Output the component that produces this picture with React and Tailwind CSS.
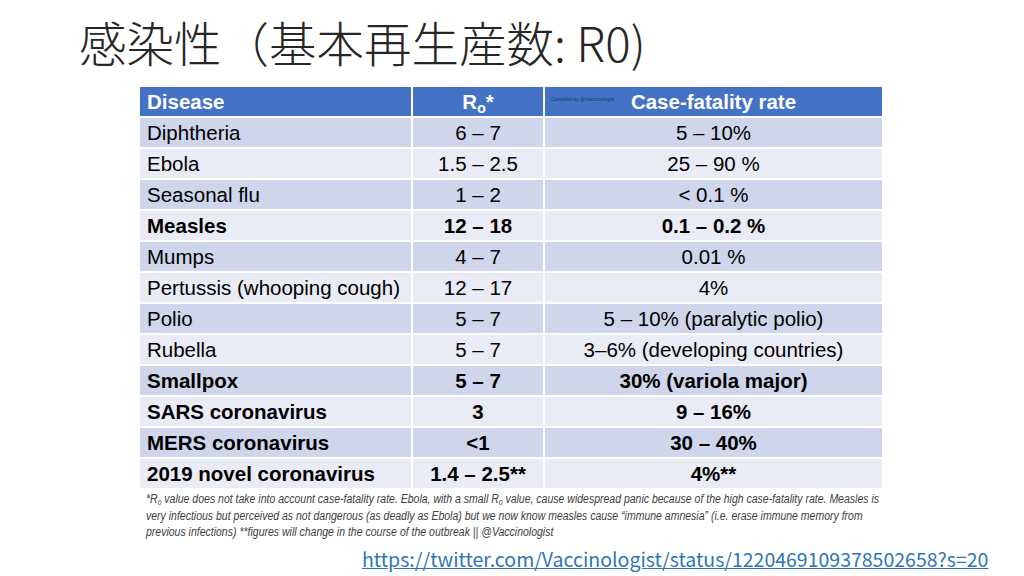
import React from "react";

const rows = [
	["Diphtheria", "6 – 7", "5 – 10%", false],
	["Ebola", "1.5 – 2.5", "25 – 90 %", false],
	["Seasonal flu", "1 – 2", "< 0.1 %", false],
	["Measles", "12 – 18", "0.1 – 0.2 %", true],
	["Mumps", "4 – 7", "0.01 %", false],
	["Pertussis (whooping cough)", "12 – 17", "4%", false],
	["Polio", "5 – 7", "5 – 10% (paralytic polio)", false],
	["Rubella", "5 – 7", "3–6% (developing countries)", false],
	["Smallpox", "5 – 7", "30% (variola major)", true],
	["SARS coronavirus", "3", "9 – 16%", true],
	["MERS coronavirus", "<1", "30 – 40%", true],
	["2019 novel coronavirus", "1.4 – 2.5**", "4%**", true],
];

const App = () => {
	return (
		<div className="w-[1024px] h-[576px] bg-white overflow-hidden flex flex-col">
			<h1 className="ml-[79px] mt-[9px] h-[65px] text-[47.5px] leading-[65px] font-light text-[#262626] font-['Noto_Sans_CJK_JP',sans-serif] whitespace-nowrap">
				感染性（基本再生産数: R0)
			</h1>

			<div className="ml-[140px] mt-[13px] w-[742px] grid grid-cols-[271px_130px_337px] gap-[2px] font-['Liberation_Sans',Arial,sans-serif] text-[20.5px] leading-[29px]">
				<div className="bg-[#4472C4] text-white font-bold pl-[7px] h-[29px]">Disease</div>
				<div className="bg-[#4472C4] text-white font-bold text-center h-[29px]">
					R<sub className="text-[14px] leading-none">o</sub>*
				</div>
				<div className="bg-[#4472C4] text-white font-bold text-center h-[29px] relative">
					<span className="absolute left-[6px] top-[10px] text-[5px] leading-none font-normal text-[#1f3a73] whitespace-nowrap">
						Compiled by @Vaccinologist
					</span>
					Case-fatality rate
				</div>
				{rows.map(([name, r0, cfr, bold], i) => {
					const bg = i % 2 === 0 ? "bg-[#CFD5EA]" : "bg-[#E9EBF5]";
					const weight = bold ? "font-bold" : "font-normal";
					return (
						<React.Fragment key={name}>
							<div className={`${bg} ${weight} text-black pl-[7px] h-[29px] whitespace-nowrap`}>{name}</div>
							<div className={`${bg} ${weight} text-black text-center h-[29px] whitespace-nowrap`}>{r0}</div>
							<div className={`${bg} ${weight} text-black text-center h-[29px] whitespace-nowrap`}>{cfr}</div>
						</React.Fragment>
					);
				})}
			</div>

			<p className="ml-[146px] mt-[3px] text-[12.5px] leading-[16.5px] italic text-[#404040] font-['Liberation_Sans',sans-serif] whitespace-nowrap origin-left scale-x-[0.84]">
				*R<sub className="text-[8px]">0</sub> value does not take into account case-fatality rate. Ebola, with a small R
				<sub className="text-[8px]">0</sub> value, cause widespread panic because of the high case-fatality rate. Measles is
				<br />
				very infectious but perceived as not dangerous (as deadly as Ebola) but we now know measles cause “immune amnesia” (i.e. erase immune memory from
				<br />
				previous infections) **figures will change in the course of the outbreak || @Vaccinologist
			</p>

			<a className="ml-[362px] mt-[6px] text-[19.5px] leading-[24px] text-[#2E75B6] underline font-['Noto_Sans_CJK_JP',sans-serif] whitespace-nowrap">
				https://twitter.com/Vaccinologist/status/1220469109378502658?s=20
			</a>
		</div>
	);
};

export default App;
